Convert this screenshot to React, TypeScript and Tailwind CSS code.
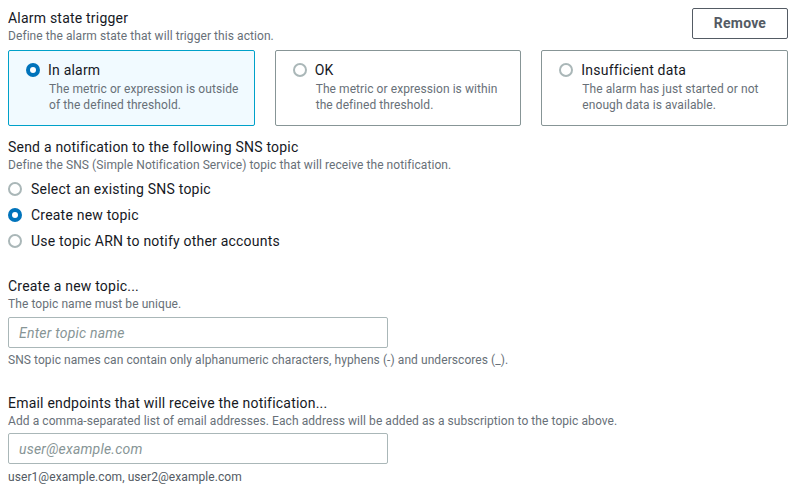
import React from "react";

const font = { fontFamily: "Roboto, 'Liberation Sans', sans-serif" };

function Radio({ checked }: { checked: boolean }) {
  return checked ? (
    <span className="flex h-[14px] w-[14px] shrink-0 items-center justify-center rounded-full bg-[#0073bb]">
      <span className="h-[6px] w-[6px] rounded-full bg-white" />
    </span>
  ) : (
    <span className="h-[14px] w-[14px] shrink-0 rounded-full border-2 border-[#aab7b8] bg-white" />
  );
}

function StateCard({ title, desc, checked }: { title: string; desc: string; checked?: boolean }) {
  return (
    <div
      className={
        "h-[76px] rounded-[2px] border pl-[17px] pr-[8px] pt-[9px] " +
        (checked ? "border-[#00a1c9] bg-[#f1faff]" : "border-[#879596] bg-white")
      }
    >
      <div className="flex h-[20px] items-center gap-[8px]">
        <Radio checked={!!checked} />
        <span className="text-[14px] tracking-[0.015em] text-[#16191f]">{title}</span>
      </div>
      <p className="ml-[23px] mt-[1px] text-[12px] leading-[16px] tracking-[0.006em] text-[#687078]">{desc}</p>
    </div>
  );
}

function Heading({ title, sub }: { title: string; sub: string }) {
  return (
    <div>
      <div className="text-[14px] leading-[20px] tracking-[0.015em] text-[#16191f]">{title}</div>
      <div className="text-[12px] leading-[16px] tracking-[0.006em] text-[#687078]">{sub}</div>
    </div>
  );
}

export default function App() {
  return (
    <div className="h-[491px] w-[808px] bg-white pl-[8px] pr-[20px] pt-[8px]" style={font}>
      <div className="flex items-start justify-between">
        <Heading title="Alarm state trigger" sub="Define the alarm state that will trigger this action." />
        <button className="h-[31px] w-[96px] rounded-[2px] border border-[#545b64] text-[14px] font-bold tracking-[0.015em] text-[#545b64]">
          Remove
        </button>
      </div>

      <div className="mt-[6px] grid grid-cols-3 gap-[20px]">
        <StateCard checked title="In alarm" desc="The metric or expression is outside of the defined threshold." />
        <StateCard title="OK" desc="The metric or expression is within the defined threshold." />
        <StateCard title="Insufficient data" desc="The alarm has just started or not enough data is available." />
      </div>

      <div className="mt-[11px]">
        <Heading
          title="Send a notification to the following SNS topic"
          sub="Define the SNS (Simple Notification Service) topic that will receive the notification."
        />
        <div className="mt-[3px] flex flex-col">
          {[
            ["Select an existing SNS topic", false],
            ["Create new topic", true],
            ["Use topic ARN to notify other accounts", false],
          ].map(([label, on]) => (
            <label key={label as string} className="flex h-[26px] items-center gap-[9px]">
              <Radio checked={on as boolean} />
              <span className="text-[14px] tracking-[0.015em] text-[#16191f]">{label as string}</span>
            </label>
          ))}
        </div>
      </div>

      <div className="mt-[22px]">
        <Heading title="Create a new topic..." sub="The topic name must be unique." />
        <input
          placeholder="Enter topic name"
          className="mt-[5px] h-[31px] w-[380px] rounded-[2px] border border-[#aab7b8] px-[10px] text-[14px] italic tracking-[0.015em] placeholder:text-[#879596]"
        />
        <div className="mt-[4px] text-[12px] leading-[16px] tracking-[0.006em] text-[#687078]">
          SNS topic names can contain only alphanumeric characters, hyphens (-) and underscores (_).
        </div>
      </div>

      <div className="mt-[25px]">
        <Heading
          title="Email endpoints that will receive the notification..."
          sub="Add a comma-separated list of email addresses. Each address will be added as a subscription to the topic above."
        />
        <input
          placeholder="user@example.com"
          className="mt-[4px] h-[31px] w-[380px] rounded-[2px] border border-[#aab7b8] px-[10px] text-[14px] italic tracking-[0.015em] placeholder:text-[#879596]"
        />
        <div className="mt-[5px] text-[12px] leading-[16px] tracking-[0.006em] text-[#545b64]">
          user1@example.com, user2@example.com
        </div>
      </div>
    </div>
  );
}
